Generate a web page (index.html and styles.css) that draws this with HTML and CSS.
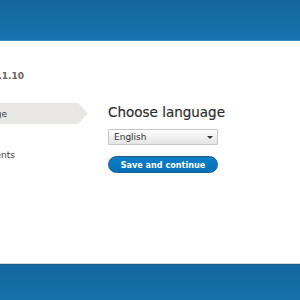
FILE: index.html
```html
<!DOCTYPE html>
<html lang="en">
<head>
    <meta charset="UTF-8">
    <meta name="viewport" content="width=device-width, initial-scale=1.0">
    <title>Choose language | Drupal</title>
    <link rel="stylesheet" href="styles.css">
</head>
<body>

<div class="band band-top"></div>

<div class="page">
    <div class="sidebar">
        <div class="site-name"><span>Drupal 9.1.10</span></div>
        <ol class="task-list">
            <li class="task active"><span>Choose language</span></li>
            <li class="task"><span>Verify requirements</span></li>
        </ol>
    </div>

    <div class="content">
        <h1>Choose language</h1>
        <form class="install-form">
            <span class="select-wrap">
                <select id="langcode">
                    <option value="en">English</option>
                </select>
            </span>
            <button type="submit">Save and continue</button>
        </form>
    </div>
</div>

<div class="band band-bottom"></div>

</body>
</html>
```

FILE: styles.css
```css
body {
    font-family: "DejaVu Sans", "Liberation Sans", Arial, sans-serif;
    background-color: #1570aa;
    margin: 0;
    padding: 0;
    overflow: hidden;
}
.band {
    background: linear-gradient(#14669d, #1673ad);
}
.band-top {
    height: 40px;
    border-bottom: 1px solid #3f8dc2;
}
.band-bottom {
    height: 40px;
    border-top: 1px solid #135d8f;
}
.page {
    display: grid;
    grid-template-columns: 88px 1fr;
    column-gap: 20px;
    height: 222px;
    background-color: #fff;
    border-bottom: 1px solid #d3d3d3;
    overflow: hidden;
}
.sidebar {
    padding-top: 29px;
}
.site-name,
.task {
    display: flex;
    justify-content: flex-end;
    white-space: nowrap;
    font-size: 9px;
    line-height: 12px;
}
.site-name {
    font-weight: bold;
    color: #67645f;
    padding-right: 64px;
}
.task-list {
    list-style: none;
    margin: 21px 0 0;
    padding: 0;
}
.task {
    color: #3b3b3b;
    padding-right: 73px;
    margin-top: 25px;
}
.task.active {
    margin-top: 0;
    padding: 5px 81px 4px 0;
    background-color: #e8e7e3;
    clip-path: polygon(-100px 0, 78px 0, 88px 50%, 78px 100%, -100px 100%);
}
.content {
    padding-top: 62px;
}
h1 {
    margin: 0;
    font-size: 13.5px;
    line-height: 18px;
    font-weight: normal;
    color: #2f2f2f;
    -webkit-text-stroke: 0.2px #2f2f2f;
}
.install-form {
    display: flex;
    flex-direction: column;
    align-items: flex-start;
}
.select-wrap {
    position: relative;
    margin-top: 8px;
}
.select-wrap::after {
    content: "";
    position: absolute;
    right: 5px;
    top: 7px;
    border-left: 3px solid transparent;
    border-right: 3px solid transparent;
    border-top: 3px solid #333;
}
select {
    appearance: none;
    -webkit-appearance: none;
    display: block;
    width: 110px;
    height: 16px;
    margin: 0;
    padding: 0 0 0 5px;
    font-family: inherit;
    font-size: 9px;
    color: #333;
    background: linear-gradient(#fefefe, #e4e4e4);
    border: 1px solid #c6c6c6;
    border-radius: 1px;
}
button {
    width: 110px;
    height: 17px;
    margin-top: 11px;
    padding: 0;
    font-family: "DejaVu Sans", "Liberation Sans", sans-serif;
    font-stretch: condensed;
    font-size: 9px;
    font-weight: bold;
    color: #fff;
    background: linear-gradient(#0d7fc6, #0071b8);
    border: 1px solid #1e5c90;
    border-radius: 10px;
    cursor: pointer;
}
```
